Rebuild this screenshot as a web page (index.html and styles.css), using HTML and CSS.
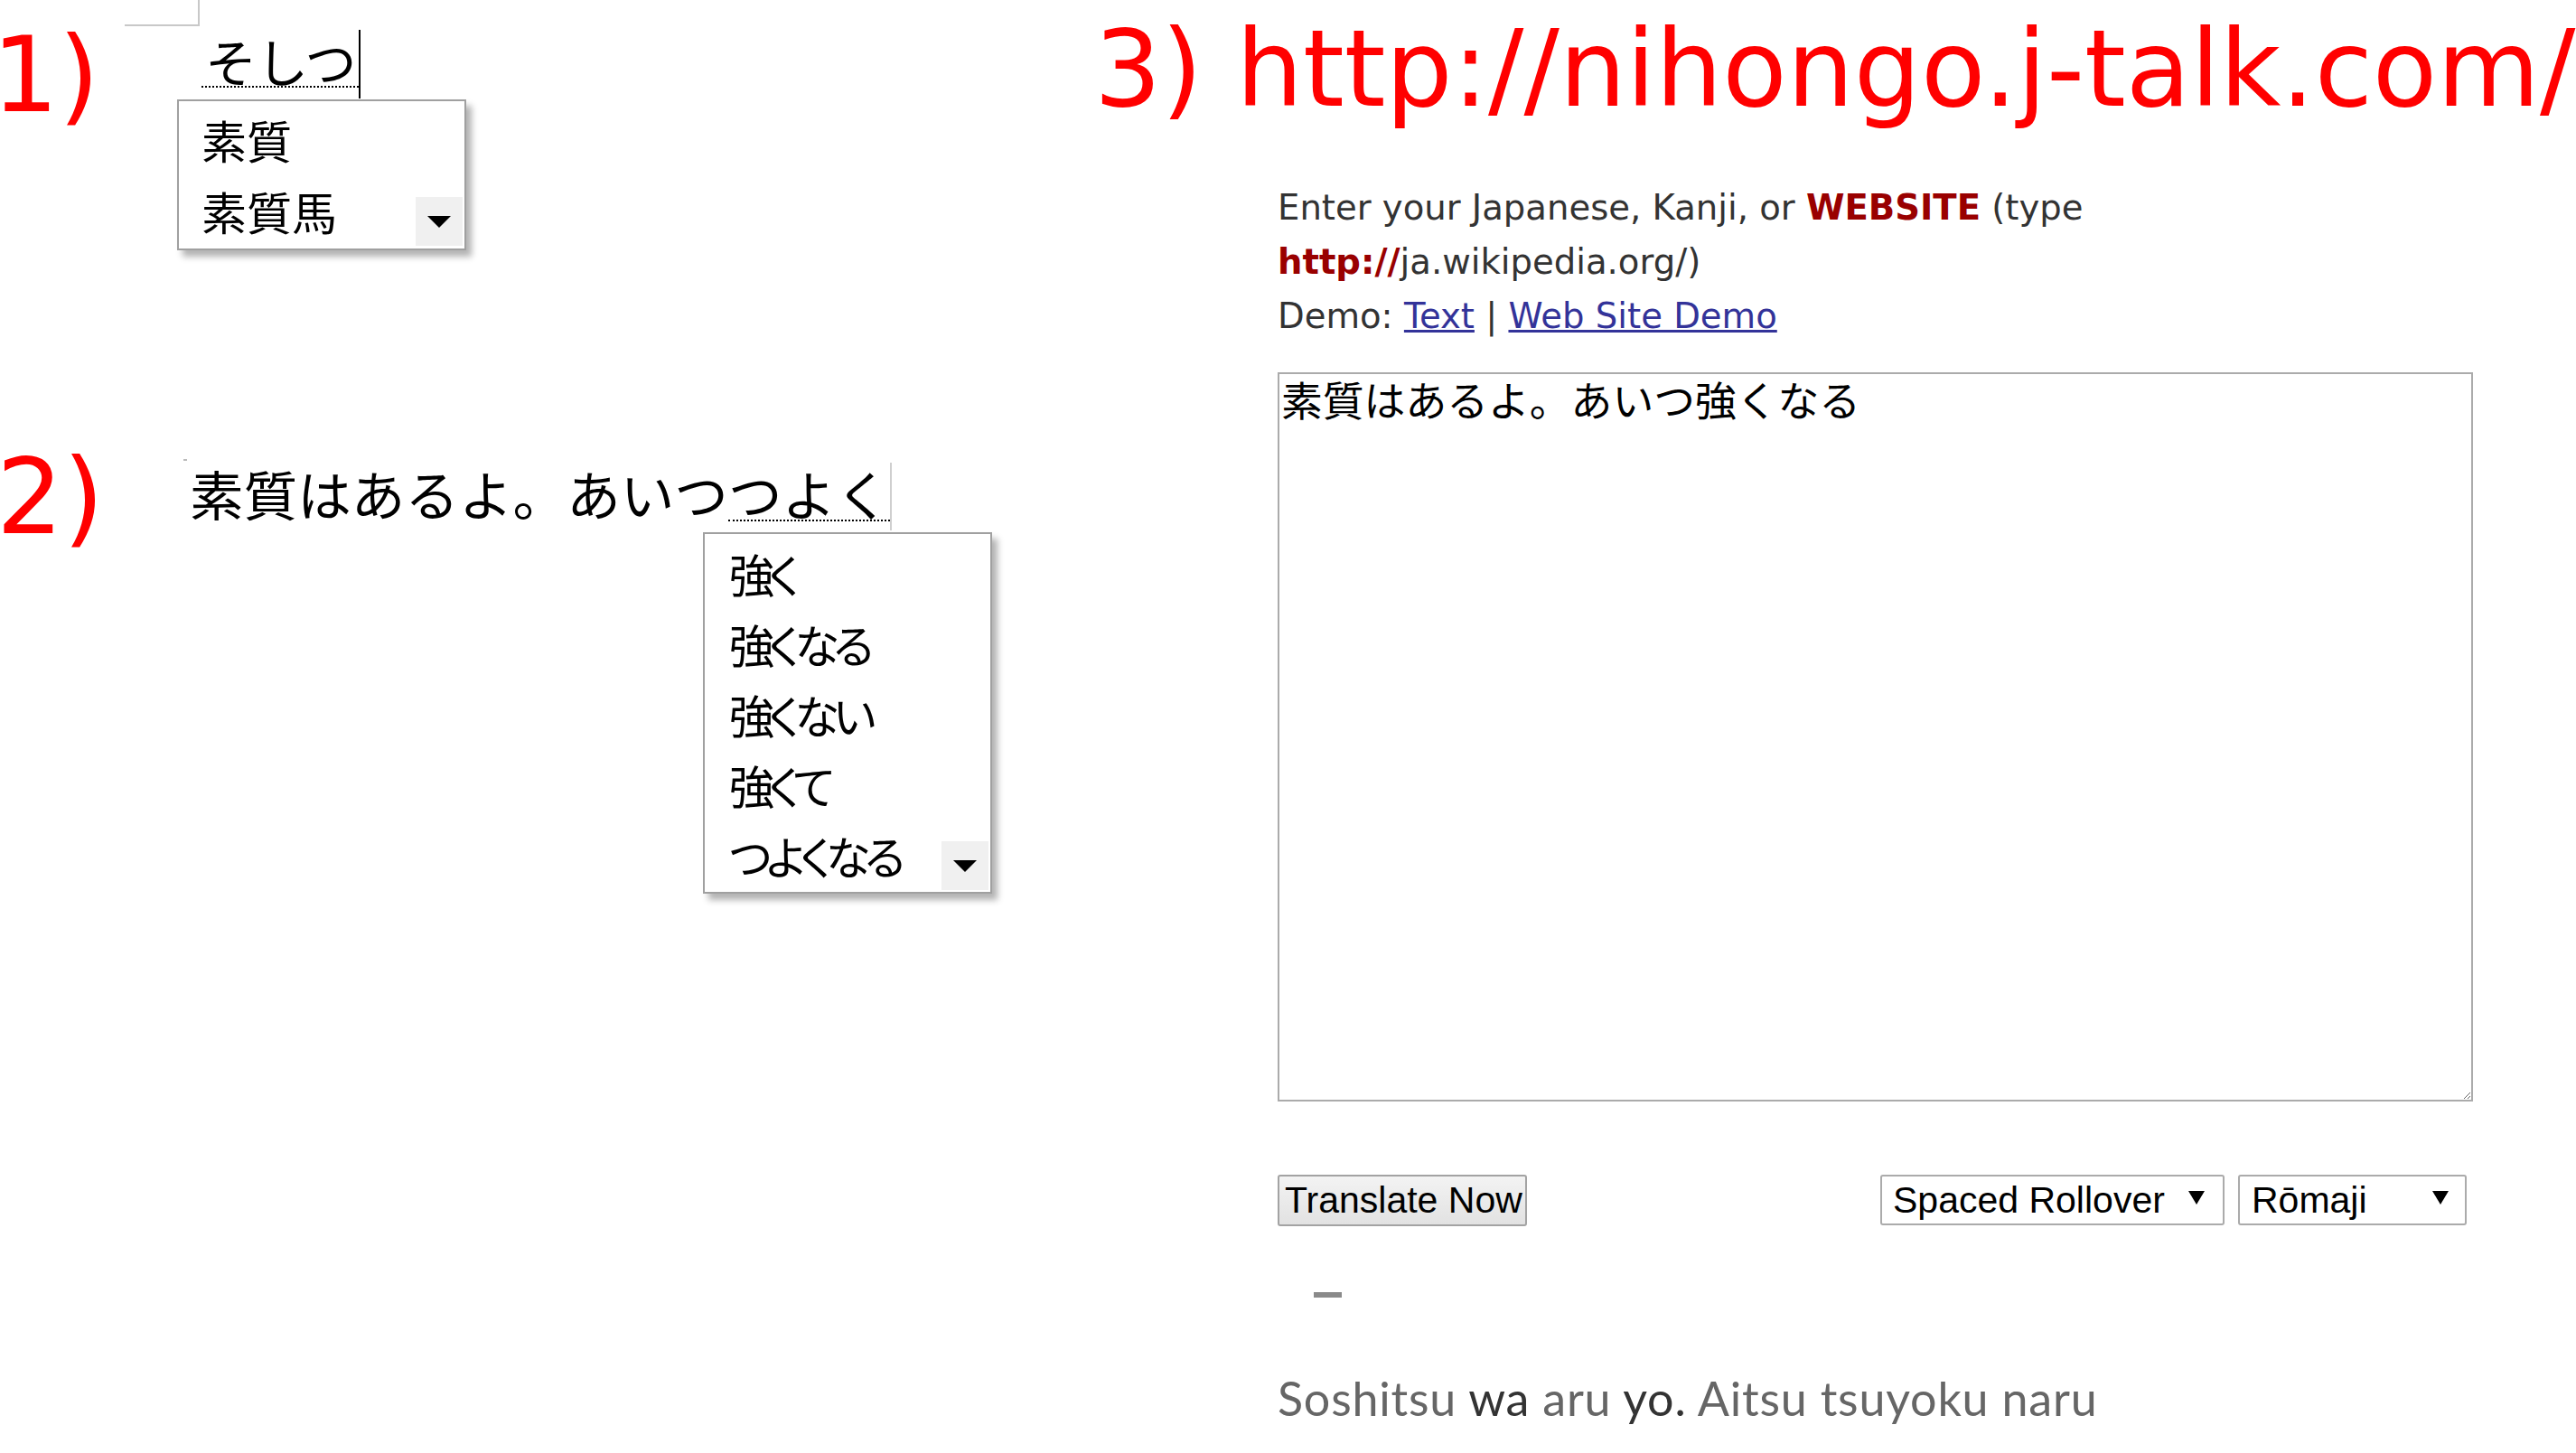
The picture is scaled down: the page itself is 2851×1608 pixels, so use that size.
FILE: index.html
```html
<!DOCTYPE html>
<html>
<head>
  <meta charset="utf-8">
  <title>IME と nihongo.j-talk.com</title>
  <link rel="stylesheet" href="styles.css">
</head>
<body>

<div class="page">
  <div class="column">
    <!-- 1) IME, first word -->
    <div class="panel panel-one">
      <div class="step step-one">1)</div>
      <div class="ime">
        <div class="corner"></div>
        <div class="compose">
          <span class="typed pending">そしつ</span>
          <span class="caret"></span>
        </div>
        <div class="candidates short">
          <div class="cand">素質</div>
          <div class="cand">素質馬<span class="more"></span></div>
        </div>
      </div>
    </div>

    <!-- 2) IME, whole sentence -->
    <div class="panel panel-two">
      <div class="step step-two">2)</div>
      <div class="ime">
        <div class="tick"></div>
        <div class="compose">
          <span class="typed">素質はあるよ。あいつ</span>
          <span class="typed pending">つよく</span>
          <span class="caret light"></span>
        </div>
        <div class="candidates tall">
          <div class="cand">強く</div>
          <div class="cand">強くなる</div>
          <div class="cand">強くない</div>
          <div class="cand">強くて</div>
          <div class="cand">つよくなる<span class="more"></span></div>
        </div>
      </div>
    </div>
  </div>

  <!-- 3) the web site -->
  <div class="column site">
    <h1 class="step title">3) http://nihongo.j-talk.com/</h1>
    <div class="form">
      <p class="intro">
        Enter your Japanese, Kanji, or <b>WEBSITE</b> (type<br>
        <b>http://</b>ja.wikipedia.org/)<br>
        Demo: <a href="#">Text</a> | <a href="#">Web Site Demo</a>
      </p>
      <textarea class="source">素質はあるよ。あいつ強くなる</textarea>
      <div class="controls">
        <button class="translate">Translate Now</button>
        <div class="picker wide">Spaced Rollover<span class="arrow"></span></div>
        <div class="picker narrow">Rōmaji<span class="arrow"></span></div>
      </div>
      <div class="dash"></div>
      <p class="romaji">Soshitsu <span class="particle">wa</span> aru <span class="particle">yo.</span> Aitsu tsuyoku naru</p>
    </div>
  </div>
</div>

</body>
</html>
```

FILE: styles.css
```css
body {
  margin: 0;
  background: #fff;
  font-family: "DejaVu Sans", sans-serif;
}

.page {
  display: grid;
  grid-template-columns: 1211px 1fr;
}

/* red step numbers */
.step {
  margin: 0;
  font: normal 116px/116px "DejaVu Sans", sans-serif;
  color: #ff0000;
  white-space: nowrap;
}

.panel {
  display: flex;
  align-items: flex-start;
}

.panel .step {
  flex: none;
  width: 138px;
}

.step-one {
  margin-top: 25px;
  text-indent: -9px;
}

.step-two {
  text-indent: -4px;
}

.panel-two {
  margin-top: 215px;
}

.ime {
  display: flex;
  flex-direction: column;
  align-items: flex-start;
}

.corner {
  width: 81px;
  height: 27px;
  border-right: 2px solid #c8c8c8;
  border-bottom: 2px solid #c8c8c8;
}

.tick {
  width: 4px;
  height: 2px;
  margin: 16px 0 0 65px;
  background: #bbb;
}

.compose {
  display: flex;
  align-items: flex-start;
}

.panel-one .compose {
  margin: 9px 0 0 85px;
}

.panel-two .compose {
  margin: 5px 0 0 72px;
}

.typed {
  font: 57px/57px "Noto Sans CJK JP", sans-serif;
  color: #000;
}

.panel-two .typed {
  font-size: 59.6px;
  line-height: 60px;
}

.pending {
  border-bottom: 2px dotted #000;
}

.panel-one .pending {
  padding: 0 2px 0 4px;
}

.caret {
  width: 2px;
  height: 76px;
  margin-top: -5px;
  background: #000;
}

.caret.light {
  height: 75px;
  margin-top: -3px;
  background: #cfcfcf;
}

/* candidate lists */
.candidates {
  width: 320px;
  box-sizing: border-box;
  border: 2px solid #a0a0a0;
  background: #fff;
  box-shadow: 6px 7px 7px rgba(0,0,0,0.3);
  font: 50px "Noto Sans CJK JP", sans-serif;
  font-feature-settings: "palt";
  color: #000;
}

.candidates.short {
  margin: 1px 0 0 58px;
  padding: 3px 2px 2px 25px;
}

.candidates.tall {
  margin: 2px 0 0 640px;
  padding: 4px 2px 2px 27px;
  letter-spacing: -6px;
}

.cand {
  display: flex;
  align-items: flex-end;
  height: 78px;
  line-height: 78px;
}

.short .cand {
  height: 79px;
  line-height: 79px;
}

.more {
  margin-left: auto;
  width: 52px;
  height: 54px;
  background: #f0f0f0;
  display: flex;
  align-items: center;
  justify-content: center;
}

.short .more {
  margin-bottom: 1px;
}

.more::before {
  content: "";
  border-left: 13px solid transparent;
  border-right: 13px solid transparent;
  border-top: 13px solid #000;
}

/* web site */
.site {
  padding-top: 19px;
}

.title {
  font-size: 116.8px;
}

.form {
  margin-left: 203px;
  width: 1323px;
}

.intro {
  margin: 65px 0 0;
  font: 38.6px/60px "DejaVu Sans", sans-serif;
  color: #333;
}

.intro b {
  color: #990000;
}

.intro a {
  color: #333399;
}

.source {
  display: block;
  box-sizing: border-box;
  width: 1323px;
  height: 807px;
  margin: 32px 0 0;
  padding: 0 2px;
  border: 2px solid #ababab;
  font: 45.8px/1.2 "Noto Sans CJK JP", sans-serif;
  color: #000;
  resize: both;
}

.controls {
  display: flex;
  align-items: flex-start;
  margin-top: 81px;
  padding-right: 7px;
}

.translate {
  width: 276px;
  height: 57px;
  padding: 0 6px;
  border: 2px solid #a3a3a3;
  border-radius: 3px;
  background: linear-gradient(#f3f3f3, #e2e2e2);
  font: 41px "Liberation Sans", Arial, sans-serif;
  color: #000;
  white-space: nowrap;
}

.picker {
  display: flex;
  align-items: center;
  justify-content: space-between;
  box-sizing: border-box;
  height: 56px;
  margin-left: 15px;
  border: 2px solid #ababab;
  border-radius: 3px;
  background: #fff;
  font: 41px "Liberation Sans", Arial, sans-serif;
  color: #000;
}

.picker.wide {
  margin-left: auto;
  width: 381px;
  padding: 0 20px 0 12px;
}

.picker.narrow {
  width: 253px;
  padding: 0 18px 0 13px;
}

.arrow {
  border-left: 9px solid transparent;
  border-right: 9px solid transparent;
  border-top: 15px solid #000;
  margin-top: -6px;
}

.dash {
  width: 31px;
  height: 6px;
  margin: 73px 0 0 40px;
  background: #8a8a8a;
}

.romaji {
  margin: 81px 0 0;
  font: 52px/60px Lato, sans-serif;
  letter-spacing: 0.8px;
  color: #666;
}

.particle {
  color: #333;
}
```
